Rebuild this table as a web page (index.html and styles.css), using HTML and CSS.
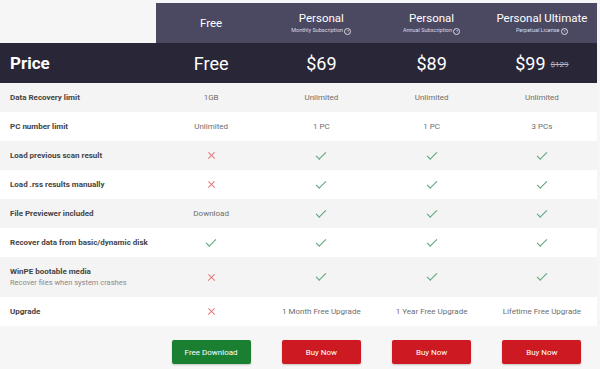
FILE: index.html
```html
<!DOCTYPE html>
<html>
<head>
    <title>Pricing</title>
    <link rel="stylesheet" href="styles.css">
</head>
<body>
    <div class="table">
        <div class="row head">
            <div class="cell label blank"></div>
            <div class="cell plan"><div class="plan-name">Free</div></div>
            <div class="cell plan"><div class="plan-name">Personal</div><div class="plan-sub">Monthly Subscription <span class="q">?</span></div></div>
            <div class="cell plan"><div class="plan-name">Personal</div><div class="plan-sub">Annual Subscription <span class="q">?</span></div></div>
            <div class="cell plan"><div class="plan-name">Personal Ultimate</div><div class="plan-sub">Perpetual License <span class="q">?</span></div></div>
        </div>
        <div class="row price">
            <div class="cell label">Price</div>
            <div class="cell">Free</div>
            <div class="cell">$69</div>
            <div class="cell">$89</div>
            <div class="cell">$99 <span class="old">$129</span></div>
        </div>
        <div class="row gray">
            <div class="cell label">Data Recovery limit</div>
            <div class="cell">1GB</div>
            <div class="cell">Unlimited</div>
            <div class="cell">Unlimited</div>
            <div class="cell">Unlimited</div>
        </div>
        <div class="row">
            <div class="cell label">PC number limit</div>
            <div class="cell">Unlimited</div>
            <div class="cell">1 PC</div>
            <div class="cell">1 PC</div>
            <div class="cell">3 PCs</div>
        </div>
        <div class="row gray">
            <div class="cell label">Load previous scan result</div>
            <div class="cell"><span class="no"></span></div>
            <div class="cell"><span class="yes"></span></div>
            <div class="cell"><span class="yes"></span></div>
            <div class="cell"><span class="yes"></span></div>
        </div>
        <div class="row">
            <div class="cell label">Load .rss results manually</div>
            <div class="cell"><span class="no"></span></div>
            <div class="cell"><span class="yes"></span></div>
            <div class="cell"><span class="yes"></span></div>
            <div class="cell"><span class="yes"></span></div>
        </div>
        <div class="row gray">
            <div class="cell label">File Previewer included</div>
            <div class="cell">Download</div>
            <div class="cell"><span class="yes"></span></div>
            <div class="cell"><span class="yes"></span></div>
            <div class="cell"><span class="yes"></span></div>
        </div>
        <div class="row">
            <div class="cell label">Recover data from basic/dynamic disk</div>
            <div class="cell"><span class="yes"></span></div>
            <div class="cell"><span class="yes"></span></div>
            <div class="cell"><span class="yes"></span></div>
            <div class="cell"><span class="yes"></span></div>
        </div>
        <div class="row gray tall">
            <div class="cell label">WinPE bootable media<span class="note">Recover files when system crashes</span></div>
            <div class="cell"><span class="no"></span></div>
            <div class="cell"><span class="yes"></span></div>
            <div class="cell"><span class="yes"></span></div>
            <div class="cell"><span class="yes"></span></div>
        </div>
        <div class="row">
            <div class="cell label">Upgrade</div>
            <div class="cell"><span class="no"></span></div>
            <div class="cell">1 Month Free Upgrade</div>
            <div class="cell">1 Year Free Upgrade</div>
            <div class="cell">Lifetime Free Upgrade</div>
        </div>
        <div class="row buttons">
            <div class="cell label"></div>
            <div class="cell"><a class="btn green" href="#">Free Download</a></div>
            <div class="cell"><a class="btn red" href="#">Buy Now</a></div>
            <div class="cell"><a class="btn red" href="#">Buy Now</a></div>
            <div class="cell"><a class="btn red" href="#">Buy Now</a></div>
        </div>
    </div>
</body>
</html>
```

FILE: styles.css
```css
body {
    margin: 0;
    background-color: #f6f6f6;
    font-family: Roboto, "Liberation Sans", sans-serif;
}

.table {
    width: 597px;
    padding-top: 3px;
}

.row {
    display: grid;
    grid-template-columns: 156px repeat(4, 1fr);
    height: 29px;
    background-color: #ffffff;
}

.row.gray {
    background-color: #f4f4f4;
}

.row.tall {
    height: 40px;
}

.cell {
    display: flex;
    align-items: center;
    justify-content: center;
    font-size: 8px;
    color: #6e6e6e;
}

.cell.label {
    flex-direction: column;
    align-items: flex-start;
    justify-content: center;
    padding-left: 10px;
    font-size: 8px;
    font-weight: bold;
    color: #444;
    white-space: nowrap;
}

.note {
    font-weight: normal;
    font-size: 7.5px;
    color: #8a8a8a;
    margin-top: 2px;
}

/* header */
.row.head {
    height: 40px;
    background-color: transparent;
}

.cell.plan {
    flex-direction: column;
    background-color: #4b4862;
    color: #fff;
}

.cell.blank {
    background-color: transparent;
}

.plan-name {
    font-size: 11.5px;
}

.plan-sub {
    font-size: 5.5px;
    margin-top: 2px;
    color: #dcdbe4;
}

.q {
    display: inline-block;
    width: 5px;
    height: 5px;
    line-height: 5px;
    border: 0.7px solid #dcdbe4;
    border-radius: 50%;
    font-size: 4px;
    text-align: center;
    vertical-align: middle;
}

/* price */
.row.price {
    height: 40px;
    background-color: #292637;
}

.row.price .cell {
    color: #fff;
    font-size: 18px;
}

.row.price .cell.label {
    font-size: 17px;
    color: #fff;
}

.old {
    font-size: 8px;
    color: #b8b6c4;
    text-decoration: line-through;
    margin-left: 5px;
    margin-top: 3px;
}

/* marks */
.yes {
    display: inline-block;
    width: 9px;
    height: 4px;
    border-left: 1.3px solid #5aa57a;
    border-bottom: 1.3px solid #5aa57a;
    transform: rotate(-45deg);
    margin-top: -3px;
}

.no {
    position: relative;
    display: inline-block;
    width: 9px;
    height: 9px;
}

.no::before,
.no::after {
    content: "";
    position: absolute;
    left: 0;
    top: 4px;
    width: 9px;
    height: 1.3px;
    background-color: #e07a7a;
    transform: rotate(45deg);
}

.no::after {
    transform: rotate(-45deg);
}

/* buttons */
.row.buttons {
    height: 41px;
    background-color: transparent;
}

.row.buttons .cell {
    align-items: flex-start;
    padding-top: 14px;
}

.btn {
    display: flex;
    align-items: center;
    justify-content: center;
    width: 79px;
    height: 24px;
    border-radius: 2px;
    color: #fff;
    font-size: 8px;
    text-decoration: none;
    box-shadow: 0 1px 2px rgba(0, 0, 0, 0.2);
}

.btn.green {
    background-color: #1b7f32;
}

.btn.red {
    background-color: #cc1922;
}
```
